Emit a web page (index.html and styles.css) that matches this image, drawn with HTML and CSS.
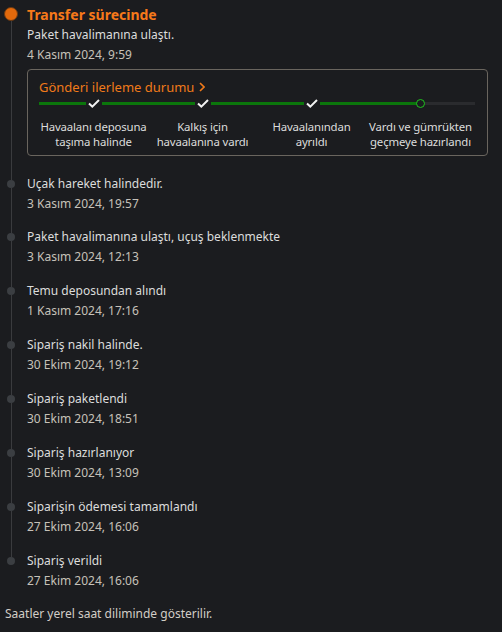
FILE: index.html
```html
<!DOCTYPE html>
<html lang="tr">
<head>
<meta charset="utf-8">
<title>Kargo takibi</title>
<link rel="stylesheet" href="styles.css">
</head>
<body>
<div class="page">
  <ul class="timeline">
    <li class="item current">
      <div class="rail"><span class="seg-top"></span><span class="dot"></span><span class="seg-bottom"></span></div>
      <div class="content">
        <div class="status">Transfer sürecinde</div>
        <div class="title">Paket havalimanına ulaştı.</div>
        <div class="date">4 Kasım 2024, 9:59</div>
        <div class="progress-card">
          <div class="card-head">Gönderi ilerleme durumu
            <svg class="chev" width="6" height="10" viewBox="0 0 6 10"><path d="M1 1 L5 5 L1 9" fill="none" stroke="#f07a1a" stroke-width="1.6"/></svg>
          </div>
          <div class="steps">
            <div class="track"></div>
            <span class="marker check col1"><svg width="12" height="9" viewBox="0 0 12 9"><path d="M1 4.5 L4.3 7.6 L11 1" fill="none" stroke="#f2f2f2" stroke-width="2"/></svg></span>
            <span class="marker check col2"><svg width="12" height="9" viewBox="0 0 12 9"><path d="M1 4.5 L4.3 7.6 L11 1" fill="none" stroke="#f2f2f2" stroke-width="2"/></svg></span>
            <span class="marker check col3"><svg width="12" height="9" viewBox="0 0 12 9"><path d="M1 4.5 L4.3 7.6 L11 1" fill="none" stroke="#f2f2f2" stroke-width="2"/></svg></span>
            <span class="marker ring col4"></span>
            <div class="label col1">Havaalanı deposuna<br>taşıma halinde</div>
            <div class="label col2">Kalkış için<br>havaalanına vardı</div>
            <div class="label col3">Havaalanından<br>ayrıldı</div>
            <div class="label col4">Vardı ve gümrükten<br>geçmeye hazırlandı</div>
          </div>
        </div>
      </div>
    </li>
    <li class="item">
      <div class="rail"><span class="seg-top"></span><span class="dot"></span><span class="seg-bottom"></span></div>
      <div class="content"><div class="title">Uçak hareket halindedir.</div><div class="date">3 Kasım 2024, 19:57</div></div>
    </li>
    <li class="item">
      <div class="rail"><span class="seg-top"></span><span class="dot"></span><span class="seg-bottom"></span></div>
      <div class="content"><div class="title">Paket havalimanına ulaştı, uçuş beklenmekte</div><div class="date">3 Kasım 2024, 12:13</div></div>
    </li>
    <li class="item">
      <div class="rail"><span class="seg-top"></span><span class="dot"></span><span class="seg-bottom"></span></div>
      <div class="content"><div class="title">Temu deposundan alındı</div><div class="date">1 Kasım 2024, 17:16</div></div>
    </li>
    <li class="item">
      <div class="rail"><span class="seg-top"></span><span class="dot"></span><span class="seg-bottom"></span></div>
      <div class="content"><div class="title">Sipariş nakil halinde.</div><div class="date">30 Ekim 2024, 19:12</div></div>
    </li>
    <li class="item">
      <div class="rail"><span class="seg-top"></span><span class="dot"></span><span class="seg-bottom"></span></div>
      <div class="content"><div class="title">Sipariş paketlendi</div><div class="date">30 Ekim 2024, 18:51</div></div>
    </li>
    <li class="item">
      <div class="rail"><span class="seg-top"></span><span class="dot"></span><span class="seg-bottom"></span></div>
      <div class="content"><div class="title">Sipariş hazırlanıyor</div><div class="date">30 Ekim 2024, 13:09</div></div>
    </li>
    <li class="item">
      <div class="rail"><span class="seg-top"></span><span class="dot"></span><span class="seg-bottom"></span></div>
      <div class="content"><div class="title">Siparişin ödemesi tamamlandı</div><div class="date">27 Ekim 2024, 16:06</div></div>
    </li>
    <li class="item last">
      <div class="rail"><span class="seg-top"></span><span class="dot"></span><span class="seg-bottom"></span></div>
      <div class="content"><div class="title">Sipariş verildi</div><div class="date">27 Ekim 2024, 16:06</div></div>
    </li>
  </ul>
  <p class="note">Saatler yerel saat diliminde gösterilir.</p>
</div>
</body>
</html>
```

FILE: styles.css
```css
html, body {
  margin: 0;
  padding: 0;
  background: #1b1c1f;
}

body {
  font-family: "Noto Sans", "DejaVu Sans", sans-serif;
  font-size: 12px;
  color: #dcdcdc;
}

.page {
  padding: 5px 14px 0 5px;
}

.timeline {
  list-style: none;
  margin: 0;
  padding: 0;
}

.item {
  display: flex;
}

.rail {
  width: 12px;
  flex: 0 0 12px;
  margin-right: 10px;
  display: flex;
  flex-direction: column;
  align-items: center;
}

.seg-top {
  width: 1px;
  height: 6px;
  background: #3a3b3e;
}

.seg-bottom {
  width: 1px;
  flex: 1;
  background: #3a3b3e;
}

.dot {
  width: 8px;
  height: 8px;
  border-radius: 50%;
  background: #3b3e42;
  flex: 0 0 auto;
}

.current .seg-top {
  height: 3px;
  background: transparent;
}

.current .dot {
  width: 12px;
  height: 12px;
  margin-left: -1px;
  background: #e2690c;
  border: 1px solid #6b3a12;
  box-sizing: content-box;
  margin-top: -1px;
}

.last .seg-bottom {
  background: transparent;
}

.content {
  flex: 1;
  padding-bottom: 14.85px;
}

.status {
  font-size: 14px;
  font-weight: 700;
  color: #f7791a;
  line-height: 20px;
}

.title {
  line-height: 20px;
  color: #dcdcdc;
}

.date {
  line-height: 19px;
  color: #c6c1b9;
}

.progress-card {
  margin: 5px 0 3.3px;
  border: 1px solid #6a655e;
  border-radius: 4px;
  padding: 7px 12px 6px 11px;
}

.card-head {
  display: flex;
  align-items: center;
  gap: 5px;
  font-size: 13px;
  line-height: 20px;
  color: #f07a1a;
}

.steps {
  display: grid;
  grid-template-columns: repeat(4, 1fr);
  grid-template-rows: 14px auto;
  margin-top: -1px;
}

.track {
  grid-row: 1;
  grid-column: 1 / -1;
  align-self: center;
  height: 3px;
  background: linear-gradient(to right, #0b760b 0, #0b760b 87.5%, #2a2b2e 87.5%);
}

.marker {
  grid-row: 1;
  justify-self: center;
  align-self: center;
  display: flex;
  align-items: center;
  justify-content: center;
}

.check {
  background: #1b1c1f;
  padding: 2px 2px;
}

.check svg {
  display: block;
}

.ring {
  width: 7px;
  height: 7px;
  border-radius: 50%;
  border: 1.5px solid #1fc21f;
  background: #1b1c1f;
}

.col1 { grid-column: 1; }
.col2 { grid-column: 2; }
.col3 { grid-column: 3; }
.col4 { grid-column: 4; }

.label {
  grid-row: 2;
  justify-self: center;
  text-align: center;
  white-space: nowrap;
  font-size: 11.4px;
  letter-spacing: -0.15px;
  line-height: 15px;
  margin-top: 8.5px;
  color: #dcdcdc;
}

.note {
  margin: -0.5px 0 0;
  line-height: 20px;
  color: #d2cdc6;
}
```
